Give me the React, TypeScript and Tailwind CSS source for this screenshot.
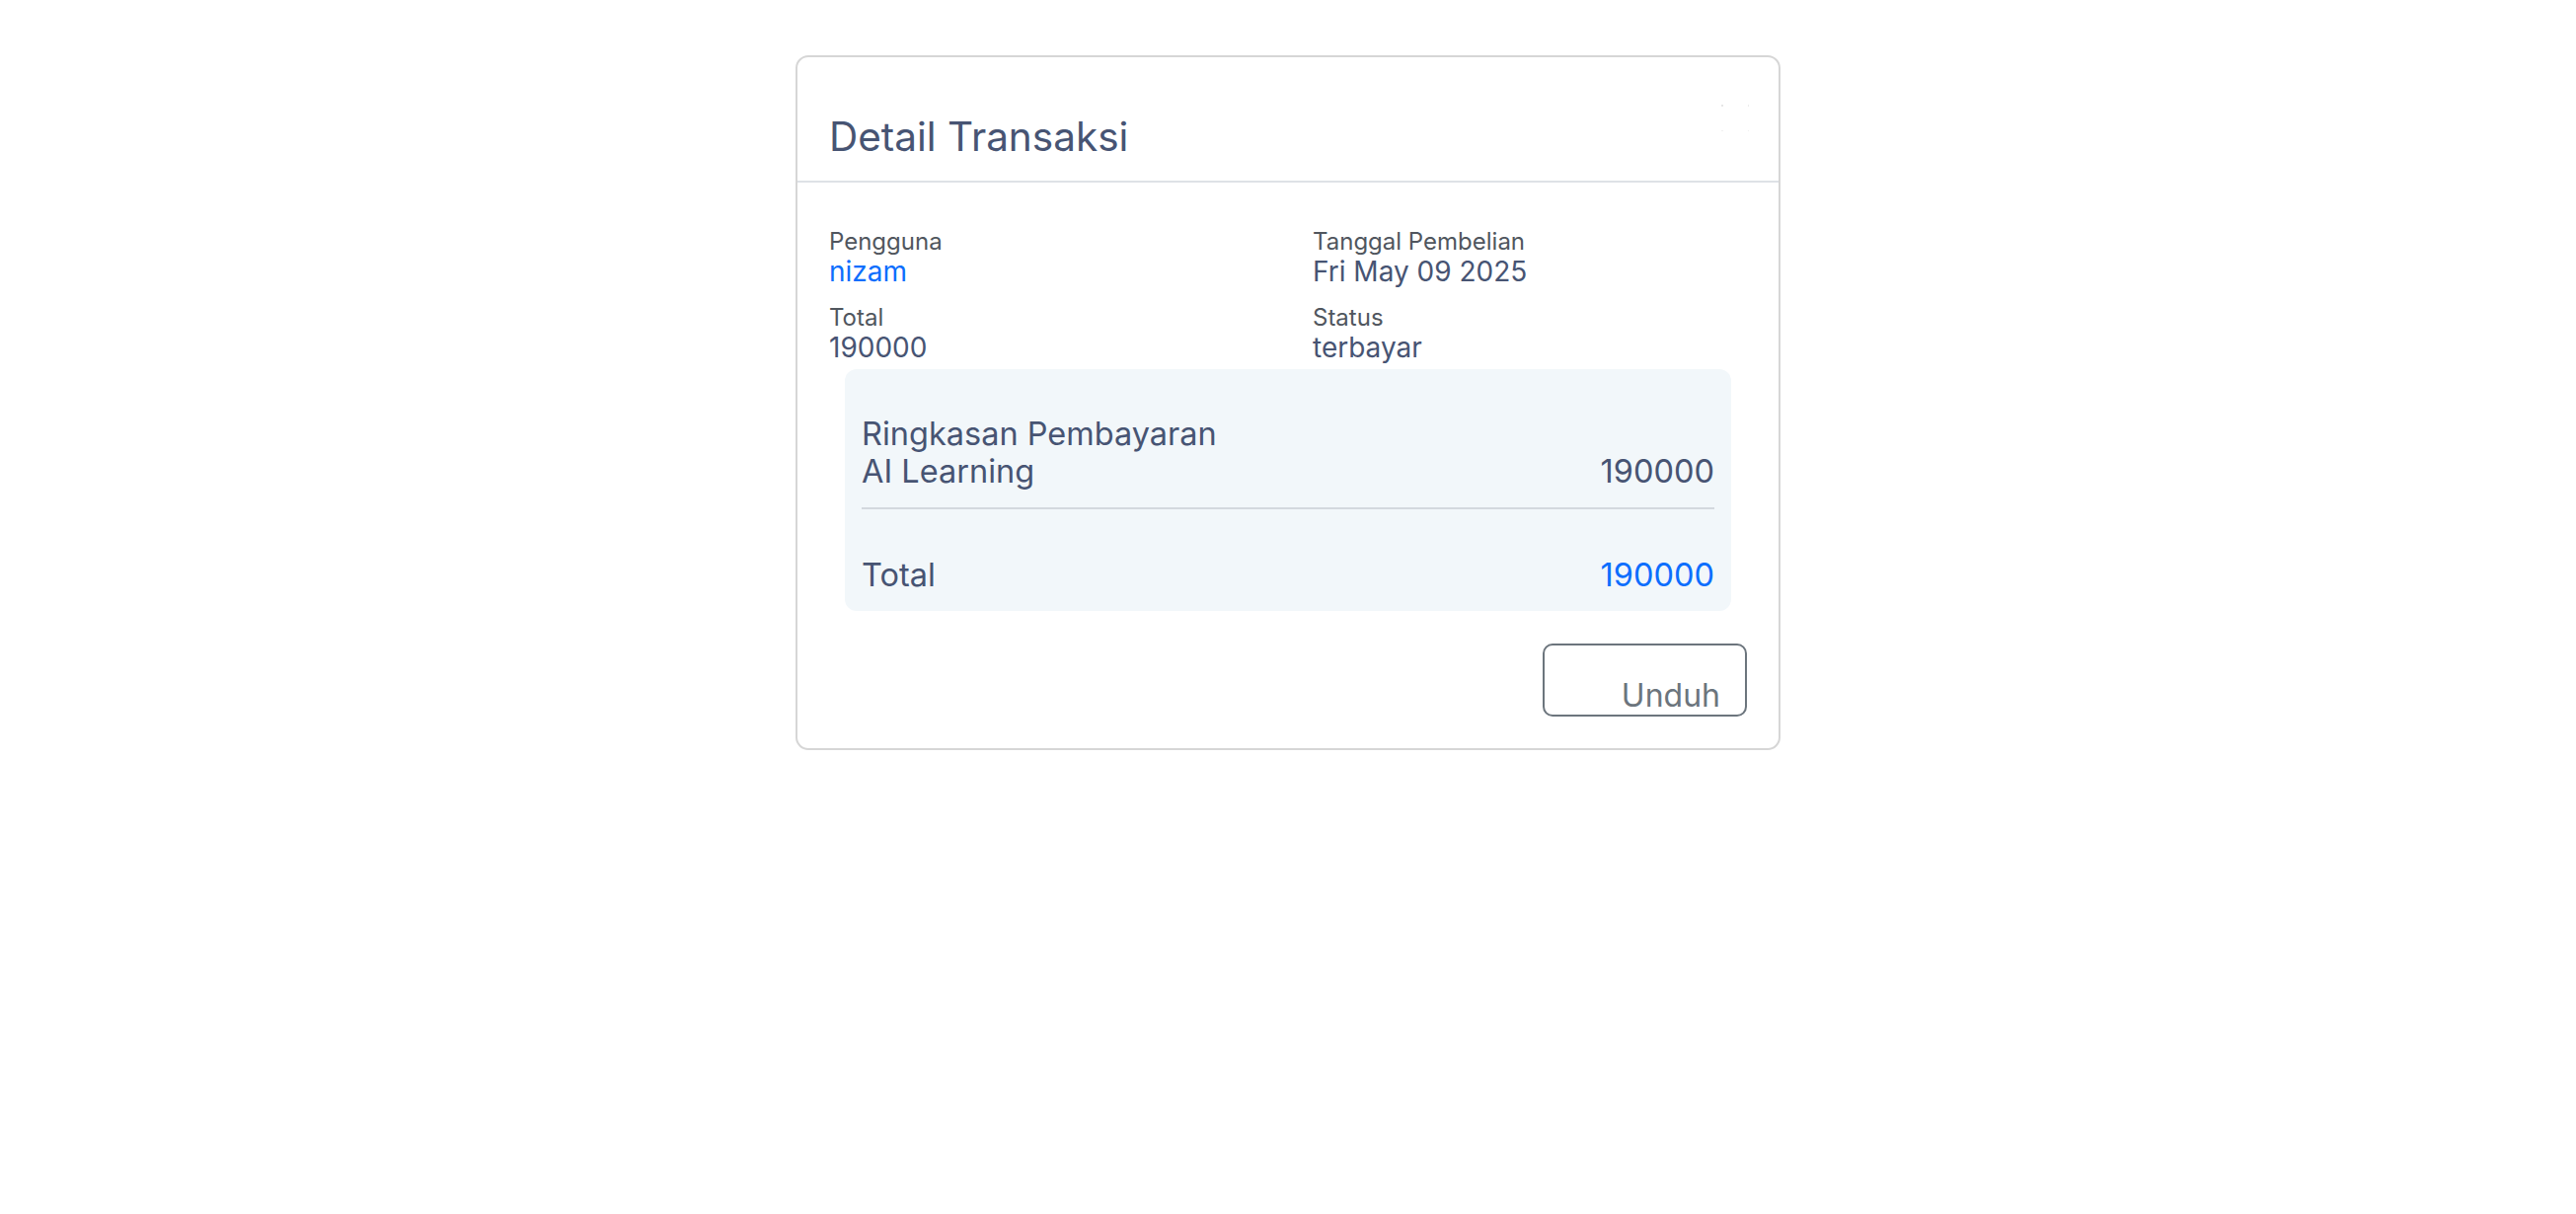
const Field = ({ label, value, accent }: { label: string; value: string; accent?: boolean }) => {
  return (
    <div>
      <div className="text-[24px] leading-[29px] text-[#50565e]">{label}</div>
      <div
        className={
          accent
            ? "text-[28px] leading-[33px] text-[#0d6efd]"
            : "text-[28px] leading-[33px] text-[#475473]"
        }
      >
        {value}
      </div>
    </div>
  );
};

const App = () => {
  return (
    <div
      className="min-h-screen bg-white pt-[56px]"
      style={{ fontFamily: "Inter, 'Noto Sans', sans-serif" }}
    >
      <div className="mx-auto w-[998px] rounded-[13px] border-2 border-[#d6d6d6] bg-white">
        {/* header */}
        <div className="flex items-start justify-between border-b-2 border-[#dee2e6] px-[32px] pt-[57px] pb-[20px]">
          <h2 className="text-[40.5px] leading-[48px] text-[#475473]">
            Detail Transaksi
          </h2>
          <svg
            width="30"
            height="30"
            viewBox="0 0 30 30"
            className="-mt-[9px] mr-[-4px]"
          >
            <rect x="0" y="0" width="2" height="2" fill="#e6e6e6" />
            <rect x="27" y="0" width="1" height="2" fill="#ececec" />
            <rect x="0" y="26" width="2" height="1" fill="#f0f0f0" />
            <rect x="27" y="26" width="1" height="1" fill="#f0f0f0" />
          </svg>
        </div>

        {/* body */}
        <div className="px-[32px] pt-[45px] pb-[32px]">
          <div className="grid grid-cols-[490px_1fr] gap-y-[15px]">
            <Field label="Pengguna" value="nizam" accent />
            <Field label="Tanggal Pembelian" value="Fri May 09 2025" />
            <Field label="Total" value="190000" />
            <Field label="Status" value="terbayar" />
          </div>

          <div className="mx-[16px] mt-[5px] rounded-[12px] bg-[#f2f7fa] px-[17px] pt-[47px] pb-[17px] text-[32.5px] leading-[38px] text-[#475473]">
            <div>Ringkasan Pembayaran</div>
            <div className="flex justify-between">
              <span>AI Learning</span>
              <span>190000</span>
            </div>
            <div className="mt-[17px] h-[2px] bg-[#d3d8de]"></div>
            <div className="mt-[48px] flex justify-between">
              <span>Total</span>
              <span className="text-[#0d6efd]">190000</span>
            </div>
          </div>

          <div className="mt-[33px] flex justify-end">
            <button
              type="button"
              className="flex h-[74px] w-[207px] items-end justify-end rounded-[10px] border-2 border-[#6c757d] pr-[25px] text-[32px] leading-[38px] text-[#6c757d]"
            >
              Unduh
            </button>
          </div>
        </div>
      </div>
    </div>
  );
};

export default App;
